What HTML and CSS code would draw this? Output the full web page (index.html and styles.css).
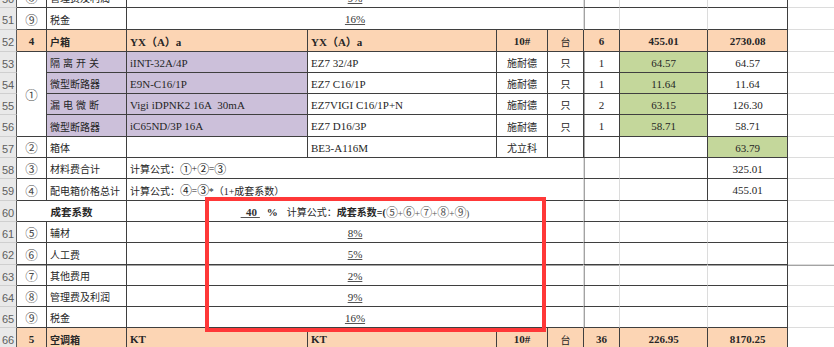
FILE: index.html
```html
<!DOCTYPE html>
<html lang="zh-CN">
<head>
<meta charset="utf-8">
<title>配电箱报价</title>
<link rel="stylesheet" href="styles.css">
</head>
<body>
<div class="viewport">
  <div class="pagebreak-v"></div>
  <div class="pagebreak-h"></div>
  <div class="sheet">
    <!-- 50 -->
    <div class="rh">50</div>
    <div class="c bb br ctr circ">⑧</div>
    <div class="c bb br">管理费及利润</div>
    <div class="c bb ctr s4 lat"><span class="u">9%</span></div>
    <div class="c bb"></div>
    <div class="c bb"></div>
    <div class="c bb br"></div>
    <div class="c k"></div>
    <!-- 51 -->
    <div class="rh">51</div>
    <div class="c bb br ctr circ">⑨</div>
    <div class="c bb br">税金</div>
    <div class="c bb ctr s4 lat"><span class="u">16%</span></div>
    <div class="c bb"></div>
    <div class="c bb"></div>
    <div class="c bb br"></div>
    <div class="c k"></div>
    <!-- 52 -->
    <div class="rh">52</div>
    <div class="c bb br ctr pe b lat">4</div>
    <div class="c bb br pe b">户箱</div>
    <div class="c bb br pe b lat">YX（A）a</div>
    <div class="c bb br pe b lat">YX（A）a</div>
    <div class="c bb br ctr pe b lat">10#</div>
    <div class="c bb br ctr pe">台</div>
    <div class="c bb br ctr pe b lat">6</div>
    <div class="c bb br ctr pe b lat">455.01</div>
    <div class="c bb br ctr pe b lat">2730.08</div>
    <div class="c k"></div>
    <!-- 53 -->
    <div class="rh">53</div>
    <div class="c bb br ctr circ r4">①</div>
    <div class="c bb br pu wide">隔离开关</div>
    <div class="c bb br pu lat">iINT-32A/4P</div>
    <div class="c bb br lat">EZ7 32/4P</div>
    <div class="c bb br ctr">施耐德</div>
    <div class="c bb br ctr">只</div>
    <div class="c bb br ctr lat">1</div>
    <div class="c bb br ctr gr lat">64.57</div>
    <div class="c bb br ctr lat">64.57</div>
    <div class="c k"></div>
    <!-- 54 -->
    <div class="rh">54</div>
    <div class="c bb br pu">微型断路器</div>
    <div class="c bb br pu lat">E9N-C16/1P</div>
    <div class="c bb br lat">EZ7 C16/1P</div>
    <div class="c bb br ctr">施耐德</div>
    <div class="c bb br ctr">只</div>
    <div class="c bb br ctr lat">1</div>
    <div class="c bb br ctr gr lat">11.64</div>
    <div class="c bb br ctr lat">11.64</div>
    <div class="c k"></div>
    <!-- 55 -->
    <div class="rh">55</div>
    <div class="c bb br pu wide">漏电微断</div>
    <div class="c bb br pu lat">Vigi iDPNK2 16A&nbsp;&nbsp;30mA</div>
    <div class="c bb br lat">EZ7VIGI C16/1P+N</div>
    <div class="c bb br ctr">施耐德</div>
    <div class="c bb br ctr">只</div>
    <div class="c bb br ctr lat">2</div>
    <div class="c bb br ctr gr lat">63.15</div>
    <div class="c bb br ctr lat">126.30</div>
    <div class="c k"></div>
    <!-- 56 -->
    <div class="rh">56</div>
    <div class="c bb br pu">微型断路器</div>
    <div class="c bb br pu lat">iC65ND/3P 16A</div>
    <div class="c bb br lat">EZ7 D16/3P</div>
    <div class="c bb br ctr">施耐德</div>
    <div class="c bb br ctr">只</div>
    <div class="c bb br ctr lat">1</div>
    <div class="c bb br ctr gr lat">58.71</div>
    <div class="c bb br ctr lat">58.71</div>
    <div class="c k"></div>
    <!-- 57 -->
    <div class="rh">57</div>
    <div class="c bb br ctr circ">②</div>
    <div class="c bb br">箱体</div>
    <div class="c bb br"></div>
    <div class="c bb br lat">BE3-A116M</div>
    <div class="c bb br ctr">尤立科</div>
    <div class="c bb br"></div>
    <div class="c bb br"></div>
    <div class="c bb br"></div>
    <div class="c bb br ctr gr lat">63.79</div>
    <div class="c k"></div>
    <!-- 58 -->
    <div class="rh">58</div>
    <div class="c bb br ctr circ">③</div>
    <div class="c bb br">材料费合计</div>
    <div class="c bb s4">计算公式：<span class="cn">①</span>+<span class="cn">②</span>=<span class="cn">③</span></div>
    <div class="c bb"></div>
    <div class="c bb br"></div>
    <div class="c bb br ctr lat">325.01</div>
    <div class="c k"></div>
    <!-- 59 -->
    <div class="rh">59</div>
    <div class="c bb br ctr circ">④</div>
    <div class="c bb br">配电箱价格总计</div>
    <div class="c bb s4">计算公式：<span class="cn">④</span>=<span class="cn">③</span>*（1+成套系数）</div>
    <div class="c bb"></div>
    <div class="c bb br"></div>
    <div class="c bb br ctr lat">455.01</div>
    <div class="c k"></div>
    <!-- 60 -->
    <div class="rh">60</div>
    <div class="c bb br ctr b s2 title">成套系数</div>
    <div class="c bb ctr s4"><span class="coef"><span class="u b lat">&nbsp;&nbsp;40&nbsp;</span><span class="b lat pct">%</span></span>计算公式：<span class="b">成套系数=(</span><span class="light"><span class="cn">⑤</span>+<span class="cn">⑥</span>+<span class="cn">⑦</span>+<span class="cn">⑧</span>+<span class="cn">⑨</span>)</span></div>
    <div class="c bb"></div>
    <div class="c bb"></div>
    <div class="c bb br"></div>
    <div class="c k"></div>
    <!-- 61 -->
    <div class="rh">61</div>
    <div class="c bb br ctr circ">⑤</div>
    <div class="c bb br">辅材</div>
    <div class="c bb ctr s4 lat"><span class="u">8%</span></div>
    <div class="c bb"></div>
    <div class="c bb"></div>
    <div class="c bb br"></div>
    <div class="c k"></div>
    <!-- 62 -->
    <div class="rh">62</div>
    <div class="c bb br ctr circ">⑥</div>
    <div class="c bb br">人工费</div>
    <div class="c bb ctr s4 lat"><span class="u">5%</span></div>
    <div class="c bb"></div>
    <div class="c bb"></div>
    <div class="c bb br"></div>
    <div class="c k"></div>
    <!-- 63 -->
    <div class="rh">63</div>
    <div class="c bb br ctr circ">⑦</div>
    <div class="c bb br">其他费用</div>
    <div class="c bb ctr s4 lat"><span class="u">2%</span></div>
    <div class="c bb"></div>
    <div class="c bb"></div>
    <div class="c bb br"></div>
    <div class="c k"></div>
    <!-- 64 -->
    <div class="rh">64</div>
    <div class="c bb br ctr circ">⑧</div>
    <div class="c bb br">管理费及利润</div>
    <div class="c bb ctr s4 lat"><span class="u">9%</span></div>
    <div class="c bb"></div>
    <div class="c bb"></div>
    <div class="c bb br"></div>
    <div class="c k"></div>
    <!-- 65 -->
    <div class="rh">65</div>
    <div class="c bb br ctr circ">⑨</div>
    <div class="c bb br">税金</div>
    <div class="c bb ctr s4 lat"><span class="u">16%</span></div>
    <div class="c bb"></div>
    <div class="c bb"></div>
    <div class="c bb br"></div>
    <div class="c k"></div>
    <!-- 66 -->
    <div class="rh">66</div>
    <div class="c bb br ctr pe b lat">5</div>
    <div class="c bb br pe b">空调箱</div>
    <div class="c bb br pe b lat">KT</div>
    <div class="c bb br pe b lat">KT</div>
    <div class="c bb br ctr pe b lat">10#</div>
    <div class="c bb br ctr pe">台</div>
    <div class="c bb br ctr pe b lat">36</div>
    <div class="c bb br ctr pe b lat">226.95</div>
    <div class="c bb br ctr pe b lat">8170.25</div>
    <div class="c k"></div>
  </div>
  <div class="highlight"></div>
</div>
</body>
</html>
```

FILE: styles.css
```css
:root {
  --grid: #dcdcdc;
  --line: #3f3f3f;
  --peach: #fcd5b4;
  --purple: #ccc0da;
  --green: #c4d79b;
}

html, body {
  margin: 0;
  padding: 0;
  background: #ffffff;
}

.viewport {
  position: relative;
  z-index: 0;
  width: 834px;
  height: 347px;
  overflow: hidden;
}

.sheet {
  display: grid;
  grid-template-columns: 17px 30px 80px 181px 189px 51px 36px 36px 88px 80px 46px;
  grid-template-rows: 21px 22px 22px 21px 21px 21px 22px 21px 21px 22px 21px 21px 22px 21px 21px 21px 22px;
  margin-top: -13px;
  font-family: "Liberation Serif", "Noto Sans CJK SC", serif;
  font-size: 10px;
  color: #262626;
}

.rh {
  background: #e9e9e9;
  border-right: 1px solid #5a5a5a;
  border-bottom: 1px solid #cfcfcf;
  color: #5e5e5e;
  font-family: "Liberation Sans Narrow", "Liberation Sans", sans-serif;
  font-size: 11px;
  display: flex;
  align-items: center;
  justify-content: center;
  padding-top: 3px;
  box-sizing: border-box;
}

.c {
  box-sizing: border-box;
  border-right: 1px solid var(--grid);
  border-bottom: 1px solid var(--grid);
  display: flex;
  align-items: center;
  padding: 1px 3px 0;
  white-space: nowrap;
  min-width: 0;
}

.c.k {
  border-right: none;
}

.bb { border-bottom-color: var(--line); }
.br { border-right-color: var(--line); }
.ctr { justify-content: center; }

.pe { background: var(--peach); }
.pu { background: var(--purple); }
.gr { background: var(--green); }

.b { font-weight: bold; }
.lat { font-size: 11px; }

.s2 { grid-column: span 2; }
.s4 { grid-column: span 4; }
.r4 { grid-row: span 4; }

.circ {
  color: #4a4a4a;
  font-size: 12.5px;
}

.cn {
  font-size: 12px;
  letter-spacing: -1.5px;
  margin-right: 1px;
}

.light { color: #555555; }

.wide { letter-spacing: 3px; }
.title { font-size: 10.5px; }

.u {
  text-decoration: underline;
  text-underline-offset: 1px;
  text-decoration-color: #555555;
  color: #333333;
}

.coef {
  margin-right: 9px;
}

.pct {
  margin-left: 7px;
}

.pagebreak-v {
  position: absolute;
  z-index: -1;
  left: 583px;
  top: 0;
  width: 2px;
  height: 347px;
  background: #a3a3a3;
}

.pagebreak-h {
  position: absolute;
  z-index: -1;
  left: 0;
  top: 264px;
  width: 834px;
  height: 2px;
  background: #a3a3a3;
}

.highlight {
  position: absolute;
  left: 205px;
  top: 197px;
  width: 341px;
  height: 135px;
  box-sizing: border-box;
  border: 4px solid #ff3838;
}
```
